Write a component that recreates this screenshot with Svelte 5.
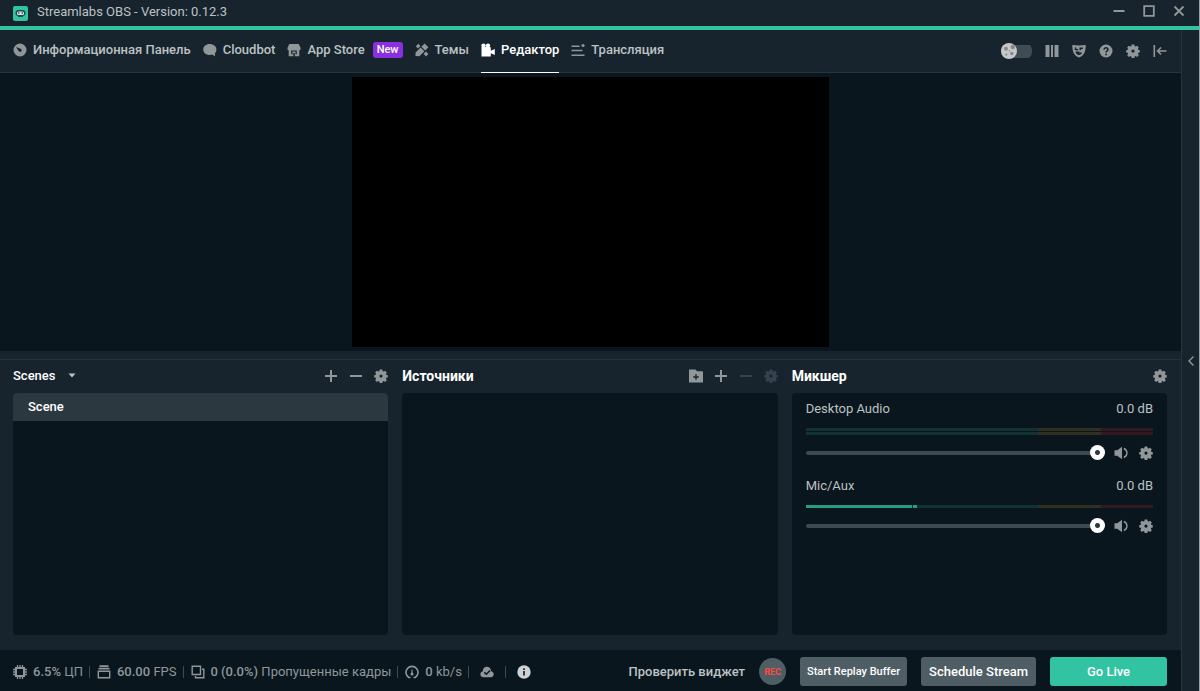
<script lang="ts">
    type Icon = 'dashboard' | 'chat' | 'store' | 'themes' | 'camera' | 'stream';

    type Tab = {
        icon: Icon;
        label: string;
        badge?: string;
    };

    type Source = {
        name: string;
        db: string;
        channels: number[];
        volume: number;
    };

    const tabs: Tab[] = [
        { icon: 'dashboard', label: 'Информационная Панель' },
        { icon: 'chat', label: 'Cloudbot' },
        { icon: 'store', label: 'App Store', badge: 'New' },
        { icon: 'themes', label: 'Темы' },
        { icon: 'camera', label: 'Редактор' },
        { icon: 'stream', label: 'Трансляция' }
    ];

    let active = $state('Редактор');
    let nightMode = $state(false);
    let collection = $state('Scenes');
    let scenes = $state(['Scene']);
    let selected = $state('Scene');

    let mixer = $state<Source[]>([
        { name: 'Desktop Audio', db: '0.0 dB', channels: [0, 0], volume: 100 },
        { name: 'Mic/Aux', db: '0.0 dB', channels: [32], volume: 100 }
    ]);

    function addScene() {
        scenes.push(`Scene ${scenes.length + 1}`);
    }

    function removeScene() {
        if (scenes.length < 2) return;
        scenes = scenes.filter(s => s !== selected);
        selected = scenes[0];
    }
</script>

{#snippet gear()}
    <svg viewBox="0 0 14 14" fill="currentColor" fill-rule="evenodd">
        <path d="M5.700.5h2.600l.4 1.700.9.4 1.500-.9 1.700 1.700-.9 1.500.3.9 1.600.4v2.200l-1.600.4-.3.9.9 1.500-1.700 1.700-1.500-.9-.9.4-.4 1.600H5.700l-.4-1.600-.9-.4-1.500.9-1.700-1.700.9-1.500-.3-.9L.2 8.400V6.200l1.600-.4.3-.9-.9-1.500 1.700-1.700 1.500.9.9-.4zM7 5.500a1.600 1.600 0 1 0 0 3.200a1.600 1.600 0 1 0 0-3.200z" />
    </svg>
{/snippet}

{#snippet plus()}
    <svg viewBox="0 0 14 14" stroke="currentColor" stroke-width="2"><path d="M7 1v12M1 7h12" /></svg>
{/snippet}

{#snippet minus()}
    <svg viewBox="0 0 14 14" stroke="currentColor" stroke-width="2"><path d="M1 7h12" /></svg>
{/snippet}

{#snippet tabIcon(name: Icon)}
    <svg viewBox="0 0 14 14" fill="currentColor" fill-rule="evenodd">
        {#if name === 'dashboard'}
            <path d="M7 .5a6.500 6.500 0 1 0 0 13a6.500 6.500 0 1 0 0-13zM3 4l4.600 1.700a1.600 1.600 0 1 1-1.900 2.200z" />
        {:else if name === 'chat'}
            <path d="M6.500 1C3 1 .3 3.300.3 6.500S3 12 6.500 12c1 0 1.900-.2 2.700-.5L12 13.200V10.200c.9-1 1.400-2.300 1.400-3.700C13.400 3.300 10.400 1 6.500 1z" />
        {:else if name === 'store'}
            <path d="M2.300 1h9.400L13.500 4.800v1.700l-1.200.9V13.200H1.700V7.400L.5 6.500V4.800zM4.200 7.500v3.800h1.300V8.500h3v2.800h1.300V7.500zM6.300 10v3.200h1.500V10z" />
        {:else if name === 'themes'}
            <path d="M9.600.6l3.800 3.700-3.200 3.200-3.800-3.700zM5.600 4.600l3.800 3.700-5 5L.4 12.900l.2-3.300zM.8 3.300L3.300.8l2.100 2.100-2.500 2.500zM10.900 8.600l2.500 2.500-2.300 2.300-2.500-2.500z" />
        {:else if name === 'camera'}
            <circle cx="2.500" cy="2.600" r="2.200" />
            <circle cx="7" cy="2.600" r="2.200" />
            <path d="M.5 4h8.300a1 1 0 0 1 1 1v2.800L13.800 6v6l-4-1.800v3.300H.5z" />
        {:else}
            <path d="M.5 2.500h8v1.400h-8zM.5 6.800h11v1.400H.5zM.5 11.500h13v1.400H.5z" />
            <circle cx="12" cy="2.500" r="1.600" />
        {/if}
    </svg>
{/snippet}

<div class="window">
    <header class="titlebar">
        <svg class="logo" viewBox="0 0 15 15">
            <rect width="15" height="15" rx="2" fill="#31c3a2" />
            <rect x="2.500" y="4" width="10" height="6" rx="3" fill="#1d4d4a" />
            <rect x="4" y="5.500" width="7" height="3.500" rx="1.500" fill="#d5e8e6" />
            <circle cx="5.800" cy="7" r=".8" fill="#17242d" />
            <circle cx="9.200" cy="7" r=".8" fill="#17242d" />
            <path d="M5 10.500h5" stroke="#1d4d4a" />
        </svg>
        <span class="title">Streamlabs OBS - Version: 0.12.3</span>
        <div class="window-buttons">
            <button aria-label="Minimize"><svg viewBox="0 0 12 12" stroke="currentColor" stroke-width="2"><path d="M.5 6h11" /></svg></button>
            <button aria-label="Maximize"><svg viewBox="0 0 12 12" fill="none" stroke="currentColor" stroke-width="1.800"><path d="M1.200 1.200h9.600v9.600H1.200z" /></svg></button>
            <button aria-label="Close"><svg viewBox="0 0 12 12" stroke="currentColor" stroke-width="1.800"><path d="M1.500 1.500l9 9M10.500 1.500l-9 9" /></svg></button>
        </div>
    </header>

    <div class="body">
        <main>
            <nav>
                {#each tabs as tab (tab.label)}
                    <button class="tab" class:active={active === tab.label} onclick={() => (active = tab.label)}>
                        {@render tabIcon(tab.icon)}
                        <span>{tab.label}</span>
                        {#if tab.badge}
                            <span class="badge">{tab.badge}</span>
                        {/if}
                    </button>
                {/each}

                <div class="tools">
                    <label class="theme-toggle">
                        <input type="checkbox" bind:checked={nightMode} aria-label="Night mode" />
                        <svg viewBox="0 0 16 16">
                            <circle cx="8" cy="8" r="8" fill="#c6c8c9" />
                            <g fill="#85898c">
                                <circle cx="5" cy="5.800" r="2" />
                                <circle cx="11.800" cy="4" r="2.200" />
                                <circle cx="10.800" cy="10.500" r="1.700" />
                                <circle cx="5.300" cy="11.600" r="1.100" />
                                <circle cx="8.500" cy="7.800" r=".7" />
                            </g>
                        </svg>
                    </label>
                    <button aria-label="Layout">
                        <svg viewBox="0 0 14 14" fill="currentColor"><path d="M.5 1h4v12h-4zM6 1h2v12H6zM9.500 1h4v12h-4z" /></svg>
                    </button>
                    <button aria-label="Face masks">
                        <svg viewBox="0 0 14 14" fill="currentColor" fill-rule="evenodd"><path d="M.3 1C4.500 1.600 9.500 1.600 13.700 1C13.700 7.500 12 12 7 13.500C2 12 .3 7.500.3 1zM2.800 3.300v3h3.500V5H4.300V3.600zM7.500 3.500v2.800h1.500V5h2V3.500zM3.500 7.500c.4 2.300 1.500 3.500 3.500 3.500 1.600 0 2.600-.9 3.200-2.500H7.300V7.500z" /></svg>
                    </button>
                    <button aria-label="Help">
                        <svg viewBox="0 0 14 14">
                            <circle cx="7" cy="7" r="6.500" fill="currentColor" />
                            <path d="M5 5.700C5 3 9.200 3.200 9 5.600C8.900 6.900 7.100 6.900 7.100 8.500" fill="none" stroke="#17242d" stroke-width="1.500" />
                            <circle cx="7.100" cy="10.400" r=".9" fill="#17242d" />
                        </svg>
                    </button>
                    <button aria-label="Settings">{@render gear()}</button>
                    <button aria-label="Log out">
                        <svg viewBox="0 0 14 14" fill="none" stroke="currentColor" stroke-width="1.600"><path d="M1.300 1v12M13.500 7H4.500M8 3.500L4.500 7 8 10.500" /></svg>
                    </button>
                </div>
            </nav>

            <section class="preview">
                <div class="canvas"></div>
            </section>

            <div class="resizer"></div>

            <div class="panels">
                <section class="panel">
                    <div class="panel-head">
                        <div class="collection">
                            <select aria-label="Scene collection" bind:value={collection}>
                                <option>Scenes</option>
                            </select>
                            <svg viewBox="0 0 8 5" fill="currentColor"><path d="M.5.5h7L4 4.500z" /></svg>
                        </div>
                        <div class="actions">
                            <button aria-label="Add scene" onclick={addScene}>{@render plus()}</button>
                            <button aria-label="Remove scene" onclick={removeScene}>{@render minus()}</button>
                            <button aria-label="Scene transitions">{@render gear()}</button>
                        </div>
                    </div>
                    <div class="box">
                        {#each scenes as scene}
                            <button class="scene" class:selected={selected === scene} onclick={() => (selected = scene)}>
                                {scene}
                            </button>
                        {/each}
                    </div>
                </section>

                <section class="panel">
                    <div class="panel-head">
                        <h2>Источники</h2>
                        <div class="actions">
                            <button aria-label="Add group">
                                <svg viewBox="0 0 14 14" fill="currentColor" fill-rule="evenodd"><path d="M0 .5h6.500L8 2.300h5.200a.8.8 0 0 1 .8.800v10.400H0zM6.300 5.300v2H4.300v1.400h2v2h1.400v-2h2V7.300h-2v-2z" /></svg>
                            </button>
                            <button aria-label="Add source">{@render plus()}</button>
                            <button aria-label="Remove source" disabled>{@render minus()}</button>
                            <button aria-label="Source settings" disabled>{@render gear()}</button>
                        </div>
                    </div>
                    <div class="box"></div>
                </section>

                <section class="panel">
                    <div class="panel-head">
                        <h2>Микшер</h2>
                        <div class="actions">
                            <button aria-label="Audio settings">{@render gear()}</button>
                        </div>
                    </div>
                    <div class="box mixer">
                        {#each mixer as source (source.name)}
                            <div class="source">
                                <div class="source-head">
                                    <span>{source.name}</span>
                                    <span>{source.db}</span>
                                </div>
                                <div class="meters">
                                    {#each source.channels as level}
                                        <div class="meter">
                                            {#if level > 0}
                                                <div class="level" style="width: {level}%"></div>
                                            {/if}
                                        </div>
                                    {/each}
                                </div>
                                <div class="controls">
                                    <input type="range" min="0" max="100" aria-label="{source.name} volume" bind:value={source.volume} />
                                    <button aria-label="Mute {source.name}">
                                        <svg viewBox="0 0 14 14">
                                            <path d="M.5 4.200h2.800L8 .8v12.400L3.300 9.800H.5z" fill="currentColor" />
                                            <path d="M9.800 2.500C14 4 14 10 9.800 11.500" fill="none" stroke="currentColor" stroke-width="1.400" />
                                        </svg>
                                    </button>
                                    <button aria-label="{source.name} settings">{@render gear()}</button>
                                </div>
                            </div>
                        {/each}
                    </div>
                </section>
            </div>

            <footer>
                <div class="stats">
                    <span class="stat">
                        <svg viewBox="0 0 14 14" fill="none" stroke="currentColor"><path d="M3 3h8v8H3z" stroke-width="2" /><path d="M4.500 0v2.500M7 0v2.500M9.500 0v2.500M4.500 11.500V14M7 11.500V14M9.500 11.500V14M0 4.500h2.500M0 7h2.500M0 9.500h2.500M11.500 4.500H14M11.500 7H14M11.500 9.500H14" stroke-width="1.300" /></svg>
                        <span><b>6.5%</b> ЦП</span>
                    </span>
                    <span class="stat">
                        <svg viewBox="0 0 14 14" fill="none" stroke="currentColor" stroke-width="1.400"><path d="M1.300 6.200h11.400v6.600H1.300z" /><path d="M1.500 3.700h11M2.500 1.200h9" stroke-width="1.800" /></svg>
                        <span><b>60.00</b> FPS</span>
                    </span>
                    <span class="stat">
                        <svg viewBox="0 0 14 14" fill="none" stroke="currentColor" stroke-width="1.400"><path d="M1.200 1.200h8.300v8.300H1.200zM11 4.200h1.800v8.600H4.500V11" /></svg>
                        <span><b>0 (0.0%)</b> Пропущенные кадры</span>
                    </span>
                    <span class="stat">
                        <svg viewBox="0 0 14 14" fill="none" stroke="currentColor" stroke-width="1.600"><path d="M5.500 12.500H3.800A6 6 0 1 1 10.200 12.500H8.500" /><path d="M7 4.500v4" stroke-width="1.200" /><circle cx="7" cy="9" r=".7" /></svg>
                        <span><b>0</b> kb/s</span>
                    </span>
                    <span class="stat cloud">
                        <svg viewBox="0 0 14 14"><path d="M3.600 12.200C-.6 12.200-.6 6.900 2.800 6.200C2.900.5 10.600.2 11.200 6.200C14.800 6.900 14.500 12.200 10.700 12.200z" fill="currentColor" /><path d="M4.300 7.300l2 2 3.800-3.800" fill="none" stroke="#09161d" stroke-width="1.500" /></svg>
                    </span>
                    <span class="stat info">
                        <svg viewBox="0 0 14 14"><circle cx="7" cy="7" r="6.700" fill="currentColor" /><path d="M7 6v4.500M7 3.200v1.700" stroke="#09161d" stroke-width="1.600" /></svg>
                    </span>
                </div>

                <div class="go">
                    <button class="link">Проверить виджет</button>
                    <button class="rec">REC</button>
                    <button class="btn small">Start Replay Buffer</button>
                    <button class="btn">Schedule Stream</button>
                    <button class="btn live">Go Live</button>
                </div>
            </footer>
        </main>

        <aside>
            <button aria-label="Show chat">
                <svg viewBox="0 0 8 12" fill="none" stroke="currentColor" stroke-width="1.400"><path d="M6.500 1.500L2 6l4.500 4.500" /></svg>
            </button>
        </aside>
    </div>
</div>

<style>
    :global(body) {
        background: #17242d;
    }

    .window {
        box-sizing: border-box;
        display: flex;
        flex-direction: column;
        min-height: 100vh;
        border-right: 1px solid #9aa0a4;
        background: #17242d;
        color: #bdc2c4;
        font-family: Roboto, "Liberation Sans", sans-serif;
        font-size: 13px;
        line-height: 16px;
    }

    svg {
        display: block;
        flex: none;
        width: 14px;
        height: 14px;
    }

    button {
        display: flex;
        align-items: center;
        padding: 0;
        border: none;
        background: none;
        color: #919699;
        font: inherit;
        cursor: pointer;
    }

    button:disabled {
        color: #35424a;
        cursor: default;
    }

    .titlebar {
        display: flex;
        align-items: center;
        gap: 9px;
        height: 26px;
        padding: 0 14px 0 13px;
        border-bottom: 4px solid #31c3a2;
    }

    .logo {
        width: 15px;
        height: 15px;
    }

    .title {
        margin-bottom: 2px;
    }

    .window-buttons {
        display: flex;
        gap: 18px;
        margin: 0 0 4px auto;
    }

    .window-buttons svg {
        width: 12px;
        height: 12px;
    }

    .body {
        display: flex;
        flex: 1;
    }

    main {
        display: flex;
        flex: 1;
        flex-direction: column;
        min-width: 0;
    }

    nav {
        display: flex;
        gap: 12px;
        height: 42px;
        padding: 0 14px 0 13px;
        border-bottom: 1px solid #27343c;
    }

    .tab {
        gap: 6px;
        height: 43px;
        box-sizing: border-box;
        border-bottom: 1px solid transparent;
        padding-bottom: 3px;
        color: #919699;
        font-weight: 500;
    }

    .tab span {
        color: #bdc2c4;
    }

    .tab.active {
        border-bottom-color: #ffffff;
        color: #ffffff;
    }

    .tab.active span {
        color: #ffffff;
    }

    .tab .badge {
        margin-left: 2px;
        padding: 0 4px;
        border-radius: 3px;
        background: #8a30e0;
        color: #ffffff;
        font-size: 11px;
    }

    .tools {
        display: flex;
        align-items: center;
        gap: 13px;
        margin-left: auto;
    }

    .theme-toggle {
        display: flex;
        width: 31px;
        border-radius: 7px;
        background: linear-gradient(#3f4c54, #3f4c54) center / 100% 13px no-repeat;
        cursor: pointer;
    }

    .theme-toggle input {
        position: absolute;
        opacity: 0;
        margin: 0;
    }

    .theme-toggle svg {
        width: 16px;
        height: 16px;
    }

    .theme-toggle input:checked + svg {
        margin-left: auto;
    }

    .preview {
        display: flex;
        flex: 1;
        justify-content: center;
        padding: 4px 0;
        background: #09161d;
    }

    .canvas {
        min-height: 270px;
        aspect-ratio: 53 / 30;
        background: #000000;
    }

    .resizer {
        height: 8px;
        border-bottom: 1px solid #27343c;
        cursor: ns-resize;
    }

    .panels {
        display: grid;
        grid-template-columns: repeat(3, 1fr);
        gap: 14px;
        padding: 0 14px 15px 13px;
    }

    .panel-head {
        display: flex;
        align-items: center;
        justify-content: space-between;
        box-sizing: border-box;
        height: 33px;
        padding-bottom: 2px;
    }

    h2 {
        margin: 0;
        color: #ffffff;
        font-size: 14px;
        font-weight: 700;
    }

    .collection {
        display: flex;
        align-items: center;
        gap: 12px;
    }

    .collection select {
        appearance: none;
        padding: 0;
        border: none;
        background: none;
        color: #ffffff;
        font: inherit;
        font-weight: 500;
    }

    .collection svg {
        width: 8px;
        height: 5px;
    }

    .actions {
        display: flex;
        gap: 11px;
    }

    .box {
        box-sizing: border-box;
        min-height: 242px;
        border-radius: 4px;
        background: #09161d;
        overflow: hidden;
    }

    .scene {
        width: 100%;
        height: 28px;
        padding: 0 15px;
        color: #bdc2c4;
        font-weight: 500;
    }

    .scene.selected {
        background: #2b383f;
        color: #ffffff;
    }

    .mixer {
        display: flex;
        flex-direction: column;
        gap: 17px;
        padding: 8px 14px;
    }

    .source-head {
        display: flex;
        justify-content: space-between;
        margin-bottom: 11px;
    }

    .meters {
        display: grid;
        gap: 1px;
        margin-bottom: 10px;
    }

    .meter {
        height: 3px;
        background: linear-gradient(to right, #113230 67%, #313020 67% 85%, #35191f 85%);
    }

    .level {
        height: 3px;
        border-right: 4px solid #279c83;
        box-sizing: border-box;
        background: linear-gradient(to left, #113230 1px, #279c83 1px);
        background-clip: padding-box;
        background-origin: padding-box;
    }

    .controls {
        display: flex;
        align-items: center;
        height: 16px;
        gap: 11px;
    }

    .controls input {
        appearance: none;
        flex: 1;
        min-width: 0;
        height: 16px;
        margin: 0 -2px 0 0;
        background: none;
    }

    .controls input::-webkit-slider-runnable-track {
        height: 4px;
        border-radius: 2px;
        background: #3d4a51;
    }

    .controls input::-webkit-slider-thumb {
        appearance: none;
        width: 15px;
        height: 15px;
        margin-top: -6px;
        border-radius: 50%;
        background: radial-gradient(circle, #2b383f 2px, #ffffff 3px);
    }

    footer {
        display: flex;
        align-items: center;
        justify-content: space-between;
        box-sizing: border-box;
        min-height: 41px;
        padding: 7px 14px 5px 13px;
        background: #09161d;
    }

    .stats {
        display: flex;
        align-items: center;
        color: #919699;
    }

    .stat {
        display: flex;
        align-items: center;
        gap: 6px;
        white-space: nowrap;
    }

    .stat + .stat::before {
        content: "";
        width: 1px;
        height: 12px;
        margin: 0 1px 0 6px;
        background: #3d4a51;
    }

    .stat b {
        font-weight: 500;
    }

    .stat.cloud::before,
    .stat.info::before {
        margin-right: 5px;
    }

    .stat.info::before {
        margin-left: 11px;
    }

    .info {
        color: #cfd3d4;
    }

    .go {
        display: flex;
        align-items: center;
        gap: 14px;
    }

    .link {
        color: #bdc2c4;
        font-weight: 500;
    }

    .rec {
        justify-content: center;
        width: 27px;
        height: 27px;
        border-radius: 50%;
        background: #4f5e65;
        color: #ff4a3d;
        font-size: 9px;
        font-weight: 700;
    }

    .btn {
        justify-content: center;
        height: 29px;
        padding: 0 8px;
        border-radius: 3px;
        background: #4f5e65;
        color: #ffffff;
        font-weight: 500;
    }

    .btn.small {
        padding: 0 7px;
        font-size: 11px;
    }

    .btn.live {
        width: 117px;
        background: #31c3a2;
    }

    aside {
        display: flex;
        align-items: center;
        justify-content: center;
        width: 17px;
        border-left: 1px solid #27343c;
    }

    aside svg {
        width: 8px;
        height: 12px;
    }
</style>
